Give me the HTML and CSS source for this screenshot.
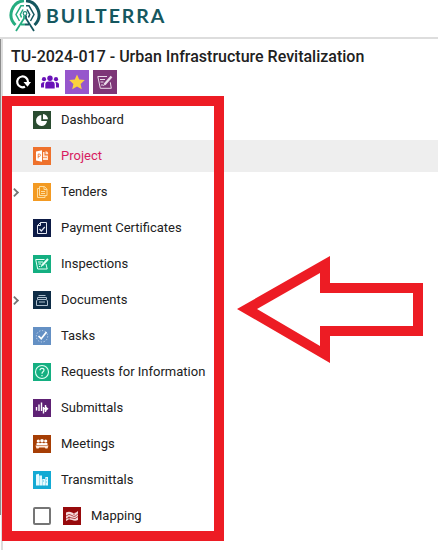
FILE: index.html
```
<!DOCTYPE html>
<html lang="en">
<head>
  <meta charset="UTF-8">
  <title>Builterra</title>
  <link rel="stylesheet" href="styles.css">
</head>
<body>
  <header>
    <svg class="logo" width="32" height="34" viewBox="0 0 32 34" fill="none">
      <path d="M15 1.8A14 14 0 0 0 6.5 26" stroke="#25ad80" stroke-width="3"/>
      <path d="M17 1.8A14 14 0 0 1 25.5 26" stroke="#15575f" stroke-width="3"/>
      <path d="M15 6.8h-3L7 15.5l3.5 6.5M14 10.5l-2.7 5 1.2 3" stroke="#25ad80" stroke-width="1.5"/>
      <path d="M17 6.8h3l5 8.7-3.5 6.5M18 10.5l2.7 5-1.2 3" stroke="#15575f" stroke-width="1.5"/>
      <circle cx="16" cy="14.5" r="1.8" stroke="#218c79" stroke-width="1.2"/>
      <path d="M15 16.5v3L7 32M12 25.5h4" stroke="#25ad80" stroke-width="1.8"/>
      <path d="M17 16.5v3L25 32M16 25.5h4" stroke="#15575f" stroke-width="1.8"/>
    </svg>
    <span class="brand">BUILTERRA</span>
  </header>

  <main>
    <h1>TU-2024-017 - Urban Infrastructure Revitalization</h1>
    <div class="actions">
      <svg class="black" viewBox="0 0 24 24"><path d="M14 16.7A5.4 5.4 0 1 1 17 12" fill="none" stroke="#fff" stroke-width="2.2"/><path d="M12.5 12h7.5l-3.5 4.8z" fill="#fff"/></svg>
      <svg class="people" viewBox="0 0 20 24" fill="#6a12b8"><circle cx="10" cy="8.2" r="2.7"/><circle cx="4" cy="9.2" r="2.1"/><circle cx="16" cy="9.2" r="2.1"/><path d="M5.3 18.5v-4q0-3 3-3h3.4q3 0 3 3v4zM1 17.5v-3q0-2.5 3.6-2.5-.6 1-.6 2.5v3zM19 17.5v-3q0-2.5-3.6-2.5 .6 1 .6 2.5v3z"/></svg>
      <svg class="violet" viewBox="0 0 24 24"><path d="M12 4.5l2.2 5 5.6.6-4.2 3.8 1.2 5.4-4.8-2.8-4.8 2.8 1.2-5.4-4.2-3.8 5.6-.6z" fill="#fbd13e"/></svg>
      <svg class="plum" viewBox="0 0 24 24" fill="none" stroke="#eadcea"><path d="M14 6.5H4.8l2.5 11.8h11l-1-6M7 9.5h5M7.5 12h3M8 15h2"/><path d="M18.5 6.5l-7 8" stroke-width="2.4"/><path d="M10.5 16l1-2"/></svg>
    </div>

    <ul class="menu">
      <li>
        <svg class="icon" viewBox="0 0 18 18"><path fill="#2a4c30" d="M0 0h18v18H0z"/><path d="M8.3 4A5.5 5.5 0 1 0 14 10H8.3z" fill="#fff"/><path d="M10 3v5.3h5A5.3 5.3 0 0 0 10 3z" fill="#fff"/></svg>
        <span>Dashboard</span>
      </li>
      <li class="active">
        <svg class="icon" viewBox="0 0 18 18"><path fill="#ee712c" d="M0 0h18v18H0z"/><path d="M3 4.5l6-1.3v11.6l-6-1.3z" fill="#fff"/><path d="M5.2 11.3V7h1q1.3 0 1.3 1.2T6.2 9.5h-1" fill="none" stroke="#ee712c" stroke-width=".8"/><path d="M10 5h1.5v3.5H15V13h-5z" fill="#ffe5d4"/><path d="M10 10.5h4" stroke="#ee712c" stroke-width=".6"/><path d="M12.5 4.3a2.8 2.8 0 0 1 2.7 2.9h-2.7z" fill="#ffe5d4"/></svg>
        <span>Project</span>
      </li>
      <li class="parent">
        <svg class="icon" viewBox="0 0 18 18" fill="none" stroke="#fedc9d"><path fill="#f39a22" stroke="none" d="M0 0h18v18H0z"/><path d="M6.5 3.5h5l2.5 2.7v6.3H6.5zM11 3.5v3h3M6.5 5.5h-2v9h7.5v-2M8 8.5h4M8 10.5h4"/></svg>
        <span>Tenders</span>
      </li>
      <li>
        <svg class="icon" viewBox="0 0 18 18" fill="none" stroke="#e4e8f2"><path fill="#0d1b46" stroke="none" d="M0 0h18v18H0z"/><path d="M7.5 3.5h6v11h-9v-8zM7.5 3.5v3h-3"/><path d="M6.5 10l1.8 2 3.5-4" stroke-width="1.2"/></svg>
        <span>Payment Certificates</span>
      </li>
      <li>
        <svg class="icon" viewBox="0 0 18 18" fill="none" stroke="#e5fff5"><path fill="#14af81" stroke="none" d="M0 0h18v18H0z"/><path d="M11.5 4.5H2.7l2 9.5h9.5L13 9M5 7h5M5.5 9h2.5M6 11.5h1"/><path d="M15 4L9 10.5" stroke-width="2"/><path d="M8 12l1-2"/></svg>
        <span>Inspections</span>
      </li>
      <li class="parent">
        <svg class="icon" viewBox="0 0 18 18" fill="none" stroke="#aebfce"><path fill="#0e2c46" stroke="none" d="M0 0h18v18H0z"/><path d="M5.5 4.5h7M4.5 8V6.5h9V8M4.5 8.5h9l1 1.5v4.5h-11V10zM6 11h6"/></svg>
        <span>Documents</span>
      </li>
      <li>
        <svg class="icon" viewBox="0 0 18 18" fill="none"><path fill="#6490c4" d="M0 0h18v18H0z"/><circle cx="9" cy="9.3" r="5.7" stroke="#c6d9ef" stroke-dasharray="1.3 1.6"/><path d="M5.5 9l2.7 2.7L13.5 5" stroke="#fff" stroke-width="1.7"/></svg>
        <span>Tasks</span>
      </li>
      <li>
        <svg class="icon" viewBox="0 0 18 18" fill="none" stroke="#e3fff5"><path fill="#14af81" stroke="none" d="M0 0h18v18H0z"/><circle cx="9" cy="9" r="6.5" stroke-width="1.1"/><path d="M7 7.3q0-2 2-2t2 1.8q0 1-1 1.7T9 10.8M9 12v1.2" stroke-width="1.2"/></svg>
        <span>Requests for Information</span>
      </li>
      <li>
        <svg class="icon" viewBox="0 0 18 18" fill="none" stroke="#fff"><path fill="#5e2174" stroke="none" d="M0 0h18v18H0z"/><path d="M3.5 8v3.5M6 5.5V12M8.5 3.5V12M10.5 8v6.5M12.5 6v7" stroke-width="1.4"/><path d="M10 9.7h4" stroke-width="1.5"/><path d="M13 7.5l2.5 2.2-2.5 2.2z" fill="#fff" stroke="none"/></svg>
        <span>Submittals</span>
      </li>
      <li>
        <svg class="icon" viewBox="0 0 18 18" fill="#fff"><path fill="#a63e05" d="M0 0h18v18H0z"/><circle cx="5.3" cy="6" r="1.6"/><circle cx="9" cy="5.7" r="1.8"/><circle cx="12.7" cy="6" r="1.6"/><path d="M3.5 10V8.3q2-1.2 3.5 0 2-1.2 4 0 1.7-1.2 3.5 0V10z"/><path d="M2.5 10.5h13l-1 3h-2l-.8-1H6.3l-.8 1h-2z" fill="#ffe8da"/></svg>
        <span>Meetings</span>
      </li>
      <li>
        <svg class="icon" viewBox="0 0 18 18"><path fill="#13aad4" d="M0 0h18v18H0z"/><path d="M3 3.5l3-.7v11.7H3zM6.3 4.5H9v10H6.3zM9.3 8H12v6.5H9.3zM12.3 6H15v8.5h-2.7z" fill="#e6faff"/><path d="M10 10h1M13 8h1M13 11h1" stroke="#13aad4" stroke-width=".7"/></svg>
        <span>Transmittals</span>
      </li>
      <li>
        <span class="checkbox"></span>
        <svg class="icon" viewBox="0 0 18 18" fill="none"><path fill="#970a0c" d="M0 0h18v18H0z"/><path d="M3 5.5q3-1.5 6 0t6-1.5v9q-3 1.5-6 0t-6 1z" fill="#f5dada"/><path d="M3 9q3-3 6-.5t6-2M3 12q3-3 6-1t6-1.5M11 5v3M6 9.5v4" stroke="#970a0c" stroke-width=".7"/></svg>
        <span>Mapping</span>
      </li>
    </ul>
  </main>

  <div class="frame"></div>
  <svg class="arrow" width="188" height="110" viewBox="236 255 188 110">
    <path d="M237 309l93-53v27h93v53h-93v27zM257 309l63 37v-20h93v-33h-93v-20z" fill="#ed1c24" fill-rule="evenodd"/>
  </svg>
</body>
</html>
```
FILE: styles.css
```
body {
  font-family: Roboto, "Liberation Sans", sans-serif;
  margin: 0;
  background: #fff;
  color: #212121;
  height: 556px;
  overflow: hidden;
  position: relative;
}
header {
  height: 37px;
  border-bottom: 2px solid #ddd;
  display: flex;
  align-items: flex-start;
}
.logo {
  margin-left: 8.5px;
  margin-top: -1px;
}
.brand {
  font-family: Lato, sans-serif;
  font-size: 19.5px;
  font-weight: 700;
  line-height: 32px;
  letter-spacing: 1.9px;
  color: #15575f;
  margin-left: 5.5px;
}
main {
  height: 511px;
  box-sizing: border-box;
  padding-left: 3px;
  background:
    linear-gradient(#8c8c8c, #8c8c8c) 0 0 / 1px 476px no-repeat,
    linear-gradient(#ddd, #ddd) 1px 0 / 2px 100% no-repeat;
}
h1 {
  font-size: 16px;
  font-weight: 500;
  line-height: 20px;
  margin: 0;
  padding: 8px 0 0 8px;
  white-space: nowrap;
}
.actions {
  display: flex;
  padding: 3px 0 0 8px;
}
.actions svg {
  width: 24px;
  height: 24px;
  margin-right: 4px;
}
.actions .people {
  width: 20px;
  margin: 0 5px 0 1px;
}
.black {
  background: #000;
}
.violet {
  background: #9656cc;
}
.plum {
  background: #7d3777;
}
.menu {
  list-style: none;
  margin: 10px 0 0;
  padding: 0;
  display: flex;
  flex-direction: column;
  gap: 4px;
}
.menu li {
  height: 32px;
  display: flex;
  align-items: center;
  padding-left: 30px;
  font-size: 13px;
  line-height: 15px;
}
.menu li > span:last-child {
  margin-top: -2px;
}
.menu li.active {
  background: #eee;
  color: #d81b60;
}
.menu .parent::before {
  content: "";
  width: 5px;
  height: 5px;
  border: solid #757575;
  border-width: 2px 2px 0 0;
  transform: rotate(45deg) scale(0.9);
  margin: 0 15px 0 -22px;
}
.icon {
  width: 18px;
  height: 18px;
  margin-right: 10px;
}
.checkbox {
  width: 14px;
  height: 14px;
  border: 2px solid #757575;
  border-radius: 2px;
  margin-right: 12px;
}
.frame {
  position: absolute;
  left: 2px;
  top: 96px;
  width: 202px;
  height: 425px;
  border: 10px solid #ed1c24;
}
.arrow {
  position: absolute;
  left: 236px;
  top: 255px;
}
```
